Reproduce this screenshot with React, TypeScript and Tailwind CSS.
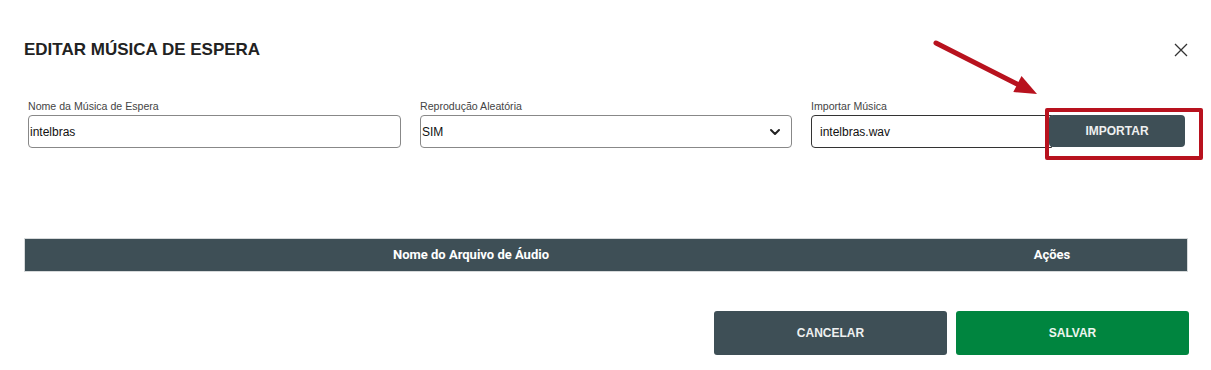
import React from 'react';
import { ChevronDown } from 'lucide-react';

const font = { fontFamily: '"Liberation Sans", Arial, sans-serif' };

export default function App() {
  return (
    <div className="relative w-full h-[370px] bg-white pt-[38px] pl-[24px] pr-[23px] text-[#222]" style={font}>
      {/* Header */}
      <div className="flex items-center justify-between h-[24px]">
        <h1 className="text-[17px] font-bold text-[#222]">EDITAR MÚSICA DE ESPERA</h1>
        <button className="w-[14px] h-[14px] flex items-center justify-center">
          <svg width="14" height="14" viewBox="0 0 14 14">
            <path d="M1 1 L13 13 M13 1 L1 13" stroke="#333" strokeWidth="1.3" fill="none" />
          </svg>
        </button>
      </div>

      {/* Fields */}
      <div className="grid grid-cols-[373px_372px_1fr] gap-[19px] mt-[37px] ml-[4px] mr-[3px]">
        <div className="flex flex-col">
          <label className="text-[10.6px] leading-[14px] text-[#444] mb-[2px]">Nome da Música de Espera</label>
          <div className="h-[33px] border border-[#888] rounded-[4px] flex items-center px-[1px] text-[12px] text-[#111]">
            intelbras
          </div>
        </div>
        <div className="flex flex-col">
          <label className="text-[10.6px] leading-[14px] text-[#444] mb-[2px]">Reprodução Aleatória</label>
          <div className="h-[33px] border border-[#888] rounded-[4px] flex items-center justify-between pl-[1px] pr-[8px] text-[12px] text-[#111]">
            <span>SIM</span>
            <ChevronDown size={16} strokeWidth={3} className="text-[#222]" />
          </div>
        </div>
        <div className="flex flex-col">
          <label className="text-[10.6px] leading-[14px] text-[#444] mb-[2px]">Importar Música</label>
          <div className="flex">
            <div className="flex-1 h-[33px] border border-[#333] rounded-l-[4px] flex items-center pl-[8px] text-[12px] text-[#111]">
              intelbras.wav
            </div>
            <div className="relative -ml-[3px] w-[136px]">
              <button className="w-full h-[32px] rounded-[4px] bg-[#3e4f56] text-[#eef0f0] text-[12px] font-bold">
                IMPORTAR
              </button>
              <div className="absolute -left-[4px] -right-[18px] -top-[7px] -bottom-[12px] border-[4px] border-[#b8121e] rounded-[2px]" />
            </div>
          </div>
        </div>
      </div>

      {/* Table header */}
      <div className="mt-[90px] grid grid-cols-[1fr_270px] h-[34px] bg-[#3e4f56] border border-[#d6d9da] text-white text-[13px] font-bold" style={{ fontFamily: 'Roboto, "Liberation Sans", sans-serif' }}>
        <div className="flex items-center justify-center">Nome do Arquivo de Áudio</div>
        <div className="flex items-center justify-center">Ações</div>
      </div>

      {/* Footer buttons */}
      <div className="flex justify-end gap-[9px] mt-[39px] -mr-[1px]">
        <button className="w-[233px] h-[44px] rounded-[3px] bg-[#3e4f56] text-[#eef0f0] text-[12px] font-bold">CANCELAR</button>
        <button className="w-[233px] h-[44px] rounded-[3px] bg-[#00853f] text-[#eef6f0] text-[12px] font-bold">SALVAR</button>
      </div>

      {/* Annotation arrow */}
      <svg className="absolute left-[920px] top-[30px]" width="130" height="75" viewBox="0 0 130 75">
        <line x1="16" y1="13" x2="98" y2="54.5" stroke="#b8121e" strokeWidth="5" strokeLinecap="round" />
        <polygon points="117,64 93.3,62.1 101.5,46.1" fill="#b8121e" />
      </svg>
    </div>
  );
}
